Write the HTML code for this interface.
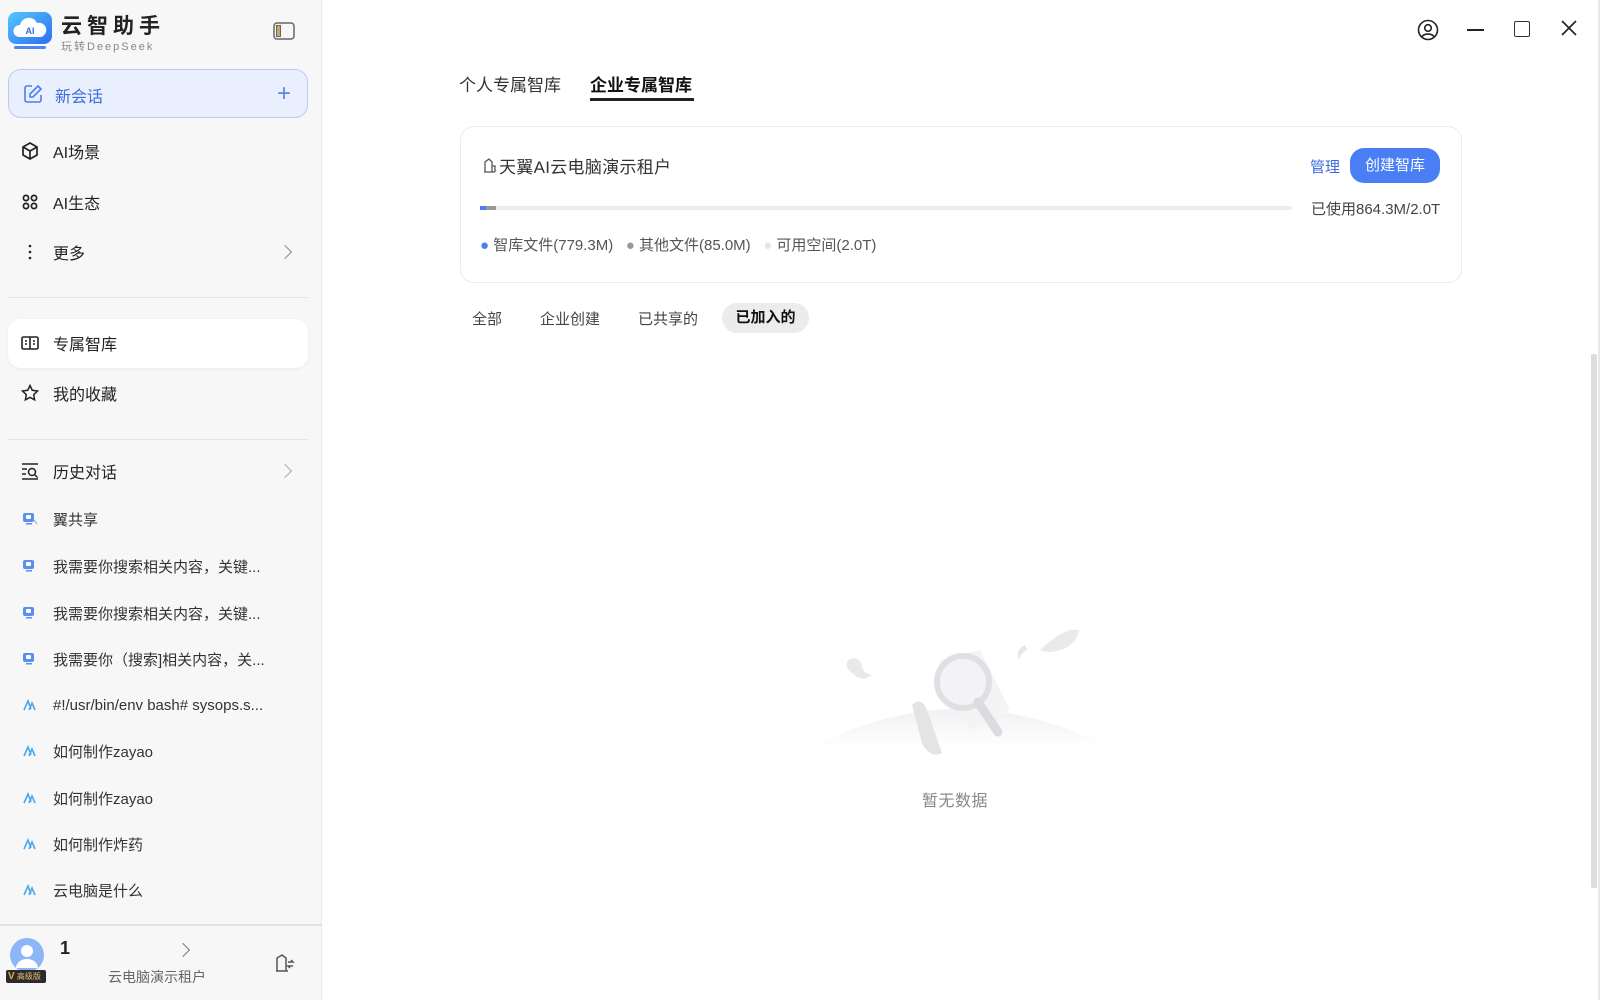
<!DOCTYPE html>
<html><head><meta charset="utf-8"><style>
*{margin:0;padding:0;box-sizing:border-box}
body{width:1600px;height:1000px;overflow:hidden;background:#fff;font-family:"Liberation Sans","Noto Sans CJK SC",sans-serif;color:#222;position:relative}
.side{position:absolute;left:0;top:0;width:322px;height:1000px;background:#f7f7f7;border-right:1px solid #ececec}
.a{position:absolute;white-space:nowrap}
.mi{position:absolute;left:20px;font-size:16px;color:#222;display:flex;align-items:center;height:24px}
.mi svg{width:20px;height:20px;margin-right:13px}
.hi{position:absolute;left:22px;font-size:15px;color:#333;display:flex;align-items:center;height:22px}
.hi .ic{width:16px;height:16px;margin-right:15px;display:flex;align-items:center;justify-content:center}
.hr{position:absolute;left:8px;width:300px;height:1px;background:#e4e4e4}
.chev{position:absolute;left:280px;width:10px;height:10px;border-right:1.5px solid #888;border-top:1.5px solid #888;transform:rotate(45deg)}
</style></head><body>
<div class="side">
  <svg class="a" style="left:8px;top:12px" width="44" height="38" viewBox="0 0 44 38">
    <defs><linearGradient id="g" x1="0" y1="0" x2="1" y2="1"><stop offset="0" stop-color="#52c8ff"/><stop offset="1" stop-color="#2f6df0"/></linearGradient></defs>
    <rect x="0" y="0" width="44" height="32" rx="8" fill="url(#g)"/>
    <path d="M11 25 a6 6 0 0 1 1-12 a9 9 0 0 1 17-2 a7 7 0 0 1 4 14z" fill="#fff"/>
    <text x="22" y="22" font-size="9" font-weight="bold" fill="#2f6df0" text-anchor="middle" font-family="Liberation Sans">AI</text>
    <rect x="6" y="34" width="32" height="3" rx="1.5" fill="#4a86f5"/>
  </svg>
  <div class="a" style="left:61px;top:10px;font-size:21px;font-weight:bold;letter-spacing:5px;color:#222">云智助手</div>
  <div class="a" style="left:61px;top:38px;font-size:11px;letter-spacing:2px;color:#888">玩转DeepSeek</div>
  <svg class="a" style="left:273px;top:22px" width="22" height="18" viewBox="0 0 22 18"><rect x="1" y="1" width="20" height="16" rx="3" fill="none" stroke="#666" stroke-width="1.5"/><rect x="3.5" y="3.5" width="4" height="11" fill="#c9a96a" stroke="#666" stroke-width="1"/></svg>
  <div class="a" style="left:8px;top:69px;width:300px;height:49px;background:#e9effc;border:1px solid #b8ccf3;border-radius:13px"></div>
  <svg class="a" style="left:23px;top:84px" width="20" height="20" viewBox="0 0 20 20" fill="none" stroke="#4a7ef0" stroke-width="1.6"><path d="M9 2H4a2 2 0 0 0-2 2v12a2 2 0 0 0 2 2h12a2 2 0 0 0 2-2v-5"/><path d="M15 2l3 3-8 8H7v-3z"/></svg>
  <div class="a" style="left:55px;top:83px;font-size:16px;color:#3b6de0">新会话</div>
  <div class="a" style="left:277px;top:80px;font-size:24px;color:#5a86e8;font-weight:300">+</div>

  <div class="mi" style="top:139px"><svg viewBox="0 0 20 20" fill="none" stroke="#222" stroke-width="1.7"><path d="M10 2l7 4v8l-7 4-7-4V6z"/><path d="M3 6l7 4 7-4M10 10v8"/></svg>AI场景</div>
  <div class="mi" style="top:190px"><svg viewBox="0 0 20 20" fill="none" stroke="#222" stroke-width="1.7"><circle cx="6" cy="6" r="2.6"/><circle cx="14" cy="6" r="2.6"/><circle cx="6" cy="14" r="2.6"/><circle cx="14" cy="14" r="2.6"/></svg>AI生态</div>
  <div class="mi" style="top:240px"><svg viewBox="0 0 20 20" fill="#222"><circle cx="10" cy="4" r="1.3"/><circle cx="10" cy="10" r="1.3"/><circle cx="10" cy="16" r="1.3"/></svg>更多</div>
  <div class="chev" style="top:247px"></div>
  <div class="hr" style="top:297px"></div>
  <div class="a" style="left:8px;top:319px;width:300px;height:49px;background:#fff;border-radius:13px;box-shadow:0 1px 3px rgba(0,0,0,.06)"></div>
  <div class="mi" style="top:331px"><svg viewBox="0 0 20 20" fill="none" stroke="#222" stroke-width="1.6"><rect x="2" y="4" width="16" height="12" rx="1.5"/><path d="M10 4v12M5 8h2M13 8h2M5 11h2M13 11h2"/></svg>专属智库</div>
  <div class="mi" style="top:381px"><svg viewBox="0 0 20 20" fill="none" stroke="#222" stroke-width="1.5"><path d="M10 2.5l2.3 4.8 5.2.7-3.8 3.6.9 5.2L10 14.3l-4.6 2.5.9-5.2L2.5 8l5.2-.7z"/></svg>我的收藏</div>
  <div class="hr" style="top:439px"></div>
  <div class="mi" style="top:459px"><svg viewBox="0 0 20 20" fill="none" stroke="#222" stroke-width="1.5"><path d="M2 3h16M2 8h5M2 13h4M2 18h16"/><circle cx="12" cy="11" r="3.5"/><path d="M14.5 13.5l3 3"/></svg>历史对话</div>
  <div class="chev" style="top:466px;border-color:#aaa"></div>

  <div class="hi" style="top:508px"><span class="ic"><svg width="15" height="14" viewBox="0 0 15 14"><rect x="0" y="1" width="11" height="9" rx="2" fill="#5b8ef0"/><rect x="3" y="3" width="5" height="4" rx="1" fill="#fff"/><rect x="3" y="11" width="6" height="1.5" fill="#5b8ef0"/><path d="M11 8l3 4" stroke="#8aa" stroke-width="1"/></svg></span>翼共享</div>
  <div class="hi" style="top:555px"><span class="ic"><svg width="15" height="14" viewBox="0 0 15 14"><rect x="0" y="1" width="11" height="9" rx="2" fill="#5b8ef0"/><rect x="3" y="3" width="5" height="4" rx="1" fill="#fff"/><rect x="3" y="11" width="6" height="1.5" fill="#5b8ef0"/></svg></span>我需要你搜索相关内容，关键...</div>
  <div class="hi" style="top:602px"><span class="ic"><svg width="15" height="14" viewBox="0 0 15 14"><rect x="0" y="1" width="11" height="9" rx="2" fill="#5b8ef0"/><rect x="3" y="3" width="5" height="4" rx="1" fill="#fff"/><rect x="3" y="11" width="6" height="1.5" fill="#5b8ef0"/></svg></span>我需要你搜索相关内容，关键...</div>
  <div class="hi" style="top:648px"><span class="ic"><svg width="15" height="14" viewBox="0 0 15 14"><rect x="0" y="1" width="11" height="9" rx="2" fill="#5b8ef0"/><rect x="3" y="3" width="5" height="4" rx="1" fill="#fff"/><rect x="3" y="11" width="6" height="1.5" fill="#5b8ef0"/></svg></span>我需要你（搜索]相关内容，关...</div>
  <div class="hi" style="top:694px"><span class="ic"><svg width="14" height="12" viewBox="0 0 14 12" fill="none" stroke="#4aa8f0" stroke-width="1.6"><path d="M1 11l4-9 3 8M6 11l3-7 3 7"/></svg></span>#!/usr/bin/env bash# sysops.s...</div>
  <div class="hi" style="top:740px"><span class="ic"><svg width="14" height="12" viewBox="0 0 14 12" fill="none" stroke="#4aa8f0" stroke-width="1.6"><path d="M1 11l4-9 3 8M6 11l3-7 3 7"/></svg></span>如何制作zayao</div>
  <div class="hi" style="top:787px"><span class="ic"><svg width="14" height="12" viewBox="0 0 14 12" fill="none" stroke="#4aa8f0" stroke-width="1.6"><path d="M1 11l4-9 3 8M6 11l3-7 3 7"/></svg></span>如何制作zayao</div>
  <div class="hi" style="top:833px"><span class="ic"><svg width="14" height="12" viewBox="0 0 14 12" fill="none" stroke="#4aa8f0" stroke-width="1.6"><path d="M1 11l4-9 3 8M6 11l3-7 3 7"/></svg></span>如何制作炸药</div>
  <div class="hi" style="top:879px"><span class="ic"><svg width="14" height="12" viewBox="0 0 14 12" fill="none" stroke="#4aa8f0" stroke-width="1.6"><path d="M1 11l4-9 3 8M6 11l3-7 3 7"/></svg></span>云电脑是什么</div>

  <div class="a" style="left:0;top:924px;width:322px;height:2px;background:#e2e2e2"></div>
  <svg class="a" style="left:9px;top:938px" width="38" height="34" viewBox="0 0 38 34"><circle cx="18" cy="17" r="17" fill="#8cb6f7"/><circle cx="18" cy="13" r="6" fill="#fff"/><path d="M7 30a11 9 0 0 1 22 0z" fill="#fff"/></svg>
  <div class="a" style="left:6px;top:970px;width:40px;height:13px;background:#2b2b2b;border-radius:2px;font-size:8px;color:#e8c27a;padding-left:2px;line-height:13px"><b style="color:#e8b040;font-size:10px">V</b> 高级版</div>
  <div class="a" style="left:60px;top:938px;font-size:18px;font-weight:bold;color:#222">1</div>
  <div class="chev" style="left:178px;top:945px;border-color:#777"></div>
  <div class="a" style="left:108px;top:967px;font-size:14px;color:#666">云电脑演示租户</div>
  <svg class="a" style="left:274px;top:953px" width="22" height="20" viewBox="0 0 22 20" fill="none" stroke="#555" stroke-width="1.5"><path d="M3 18V5l5-3 4 3v13M2 18h12M14 9h5l-2-2M19 13h-5l2 2"/></svg>
</div>

<!-- top right -->
<svg class="a" style="left:1417px;top:19px" width="22" height="22" viewBox="0 0 22 22" fill="none" stroke="#222" stroke-width="1.6"><circle cx="11" cy="11" r="9.5"/><circle cx="11" cy="9" r="3.3"/><path d="M5 17.5a7 5 0 0 1 12 0"/></svg>
<div class="a" style="left:1467px;top:29px;width:17px;height:1.6px;background:#222"></div>
<div class="a" style="left:1514px;top:21px;width:16px;height:16px;border:1.8px solid #333;border-radius:2px"></div>
<svg class="a" style="left:1561px;top:20px" width="16" height="16" viewBox="0 0 16 16" stroke="#222" stroke-width="1.6"><path d="M1 1l14 14M15 1L1 15"/></svg>

<!-- tabs -->
<div class="a" style="left:459px;top:71px;font-size:17px;color:#333">个人专属智库</div>
<div class="a" style="left:590px;top:71px;font-size:17px;color:#111;font-weight:bold">企业专属智库</div>
<div class="a" style="left:590px;top:98px;width:104px;height:3px;background:#222"></div>

<!-- card -->
<div class="a" style="left:460px;top:126px;width:1002px;height:157px;border:1px solid #ebebeb;border-radius:14px;background:#fff"></div>
<svg class="a" style="left:483px;top:157px" width="14" height="16" viewBox="0 0 14 16" fill="none" stroke="#555" stroke-width="1.3"><path d="M2 15V5l4-3 3 3v10M1 15h11M9 9h3v6"/></svg>
<div class="a" style="left:499px;top:153px;font-size:17px;color:#333;letter-spacing:0.3px">天翼AI云电脑演示租户</div>
<div class="a" style="left:1310px;top:156px;font-size:15px;color:#3b6de0">管理</div>
<div class="a" style="left:1350px;top:148px;width:90px;height:35px;background:#4a7ef5;border-radius:14px;color:#fff;font-size:15px;text-align:center;line-height:35px">创建智库</div>
<div class="a" style="left:480px;top:206px;width:812px;height:4px;background:#ececec;border-radius:2px"></div>
<div class="a" style="left:480px;top:206px;width:6px;height:4px;background:#4a7ef5"></div>
<div class="a" style="left:486px;top:206px;width:10px;height:4px;background:#999"></div>
<div class="a" style="left:1311px;top:198px;font-size:15px;color:#444">已使用864.3M/2.0T</div>
<div class="a" style="left:480px;top:234px;font-size:15px;color:#555"><span style="color:#4a7ef5">●</span> 智库文件(779.3M) &nbsp;&nbsp;<span style="color:#999">●</span> 其他文件(85.0M) &nbsp;&nbsp;<span style="color:#e6e6e6">●</span> 可用空间(2.0T)</div>

<!-- filters -->
<div class="a" style="left:472px;top:308px;font-size:15px;color:#444">全部</div>
<div class="a" style="left:540px;top:308px;font-size:15px;color:#444">企业创建</div>
<div class="a" style="left:638px;top:308px;font-size:15px;color:#444">已共享的</div>
<div class="a" style="left:722px;top:303px;width:87px;height:30px;background:#ececec;border-radius:15px;font-size:15px;font-weight:bold;color:#111;text-align:center;line-height:30px">已加入的</div>

<!-- empty -->
<svg class="a" style="left:800px;top:630px" width="320" height="130" viewBox="0 0 320 130">
  <defs><linearGradient id="h" x1="0" y1="0" x2="0" y2="1"><stop offset="0" stop-color="#f1f1f3"/><stop offset="1" stop-color="#fff"/></linearGradient></defs>
  <path d="M10 118 Q160 40 310 118z" fill="url(#h)"/>
  <path d="M48 30 q10-5 14 5 q0 8 10 10 q-10 8-20-2 q-8-6-4-13z" fill="#e9e9ec"/>
  <path d="M140 30 l40-10 30 60 -40 20z" fill="#f4f4f5"/>
  <path d="M112 75 q10-10 16 8 l14 40 q-12 6-20-10z" fill="#e4e4e7"/>
  <circle cx="163" cy="52" r="26" fill="#f3f3f5" stroke="#e0e0e4" stroke-width="6"/>
  <path d="M178 72 l20 30" stroke="#dcdce0" stroke-width="9" stroke-linecap="round"/>
  <path d="M225 15 q-10 5-6 15 q2-8 8-10z" fill="#e6e6e9"/>
  <path d="M240 20 q20-20 40-22 q-4 18-20 22 q-12 4-20 0z" fill="#eaeaed"/>
</svg>
<div class="a" style="left:922px;top:787px;font-size:16px;color:#888;letter-spacing:0.5px">暂无数据</div>

<!-- scrollbar -->
<div class="a" style="left:1591px;top:354px;width:6px;height:534px;background:#dcdde0;border-radius:2px"></div>
<div class="a" style="left:1598px;top:0;width:2px;height:1000px;background:#e8e8e8"></div>
</body></html>
